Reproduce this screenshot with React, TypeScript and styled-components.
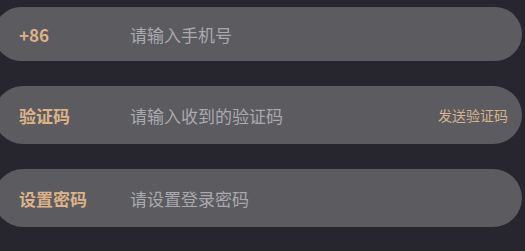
import React, { FC } from 'react';
import styled, { createGlobalStyle } from 'styled-components';

const GlobalStyle = createGlobalStyle`
  html, body {
    margin: 0;
    padding: 0;
    background-color: #27252d;
    overflow: hidden;
  }
  body {
    font-family: 'Noto Sans CJK SC', 'Noto Sans', sans-serif;
  }
`;

//Parent Div
const Form = styled.div`
  width: 525px;
  height: 251px;
  padding-top: 7px;
  box-sizing: border-box;
  display: flex;
  flex-direction: column;
  gap: 25px;
`;

//Pill row
const Field = styled.div<{ $h: number }>`
  margin-left: -6px;
  width: 528px;
  height: ${(p) => p.$h}px;
  box-sizing: border-box;
  padding: 0 14px 0 25px;
  display: flex;
  align-items: center;
  border-radius: 999px;
  background-color: #5c5b60;
`;

const Label = styled.div`
  width: 111px;
  flex-shrink: 0;
  color: #dcb387;
  font-size: 17px;
  font-weight: 700;
  line-height: 1;
`;

const Input = styled.input`
  flex: 1;
  min-width: 0;
  border: none;
  outline: none;
  background: transparent;
  padding: 0;
  font-family: 'Noto Sans CJK SC', 'Noto Sans', sans-serif;
  font-size: 17px;
  color: #e6e6e8;
  &::placeholder {
    color: #aaa9ae;
  }
`;

const SendCode = styled.div`
  flex-shrink: 0;
  color: #d4b38e;
  font-size: 14px;
  cursor: pointer;
`;

const App: FC = () => {
  return (
    <>
      <GlobalStyle />
      <Form>
        <Field $h={54}>
          <Label>+86</Label>
          <Input placeholder="请输入手机号" />
        </Field>
        <Field $h={58}>
          <Label>验证码</Label>
          <Input placeholder="请输入收到的验证码" />
          <SendCode>发送验证码</SendCode>
        </Field>
        <Field $h={58}>
          <Label>设置密码</Label>
          <Input type="password" placeholder="请设置登录密码" />
        </Field>
      </Form>
    </>
  );
};

export default App;
